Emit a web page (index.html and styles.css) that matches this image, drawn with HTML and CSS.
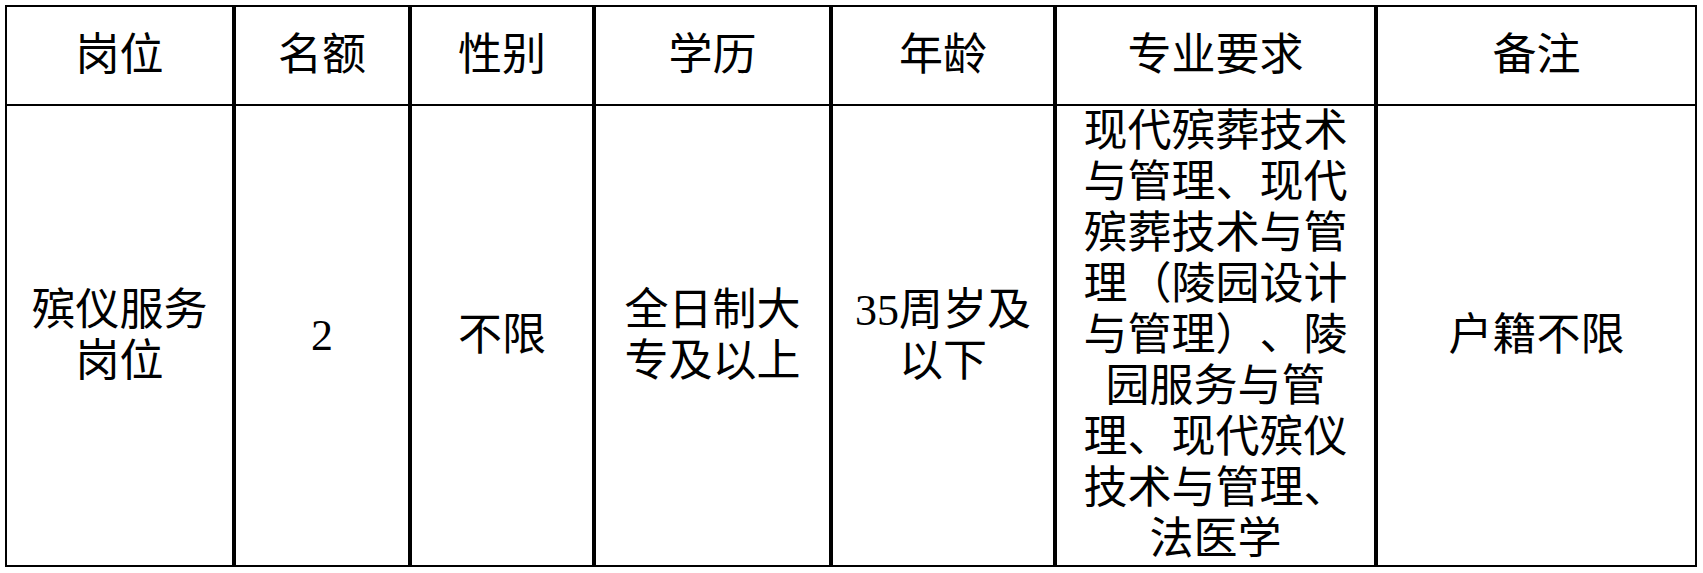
FILE: index.html
```html
<!DOCTYPE html>
<html lang="zh-CN">
<head>
<meta charset="utf-8">
<title>岗位表</title>
<link rel="stylesheet" href="styles.css">
</head>
<body>
<div class="page">
  <div class="table">
    <div class="cell head">岗位</div>
    <div class="cell head">名额</div>
    <div class="cell head">性别</div>
    <div class="cell head">学历</div>
    <div class="cell head">年龄</div>
    <div class="cell head">专业要求</div>
    <div class="cell head">备注</div>

    <div class="cell">殡仪服务岗位</div>
    <div class="cell">2</div>
    <div class="cell">不限</div>
    <div class="cell">全日制大专及以上</div>
    <div class="cell">35周岁及以下</div>
    <div class="cell">现代殡葬技术与管理、现代殡葬技术与管理（陵园设计与管理）、陵园服务与管理、现代殡仪技术与管理、法医学</div>
    <div class="cell">户籍不限</div>
  </div>
</div>
</body>
</html>
```

FILE: styles.css
```css
html, body {
  margin: 0;
  padding: 0;
  background: #ffffff;
}

.page {
  padding: 5px;
}

.table {
  width: 1692px;
  box-sizing: border-box;
  display: grid;
  grid-template-columns: 225px 172px 180px 233px 220px 317px 317px;
  grid-template-rows: 97px 459px;
  column-gap: 4px;
  row-gap: 2px;
  padding: 2px;
  background: #000000;
  font-family: "Liberation Serif", "Noto Sans CJK SC", serif;
  font-size: 44px;
  line-height: 51px;
  color: #000000;
  text-spacing-trim: space-all;
  line-break: strict;
}

.cell {
  background: #ffffff;
  display: flex;
  align-items: center;
  justify-content: center;
  text-align: center;
  padding: 0 8px;
  box-sizing: border-box;
  min-width: 0;
}
```
